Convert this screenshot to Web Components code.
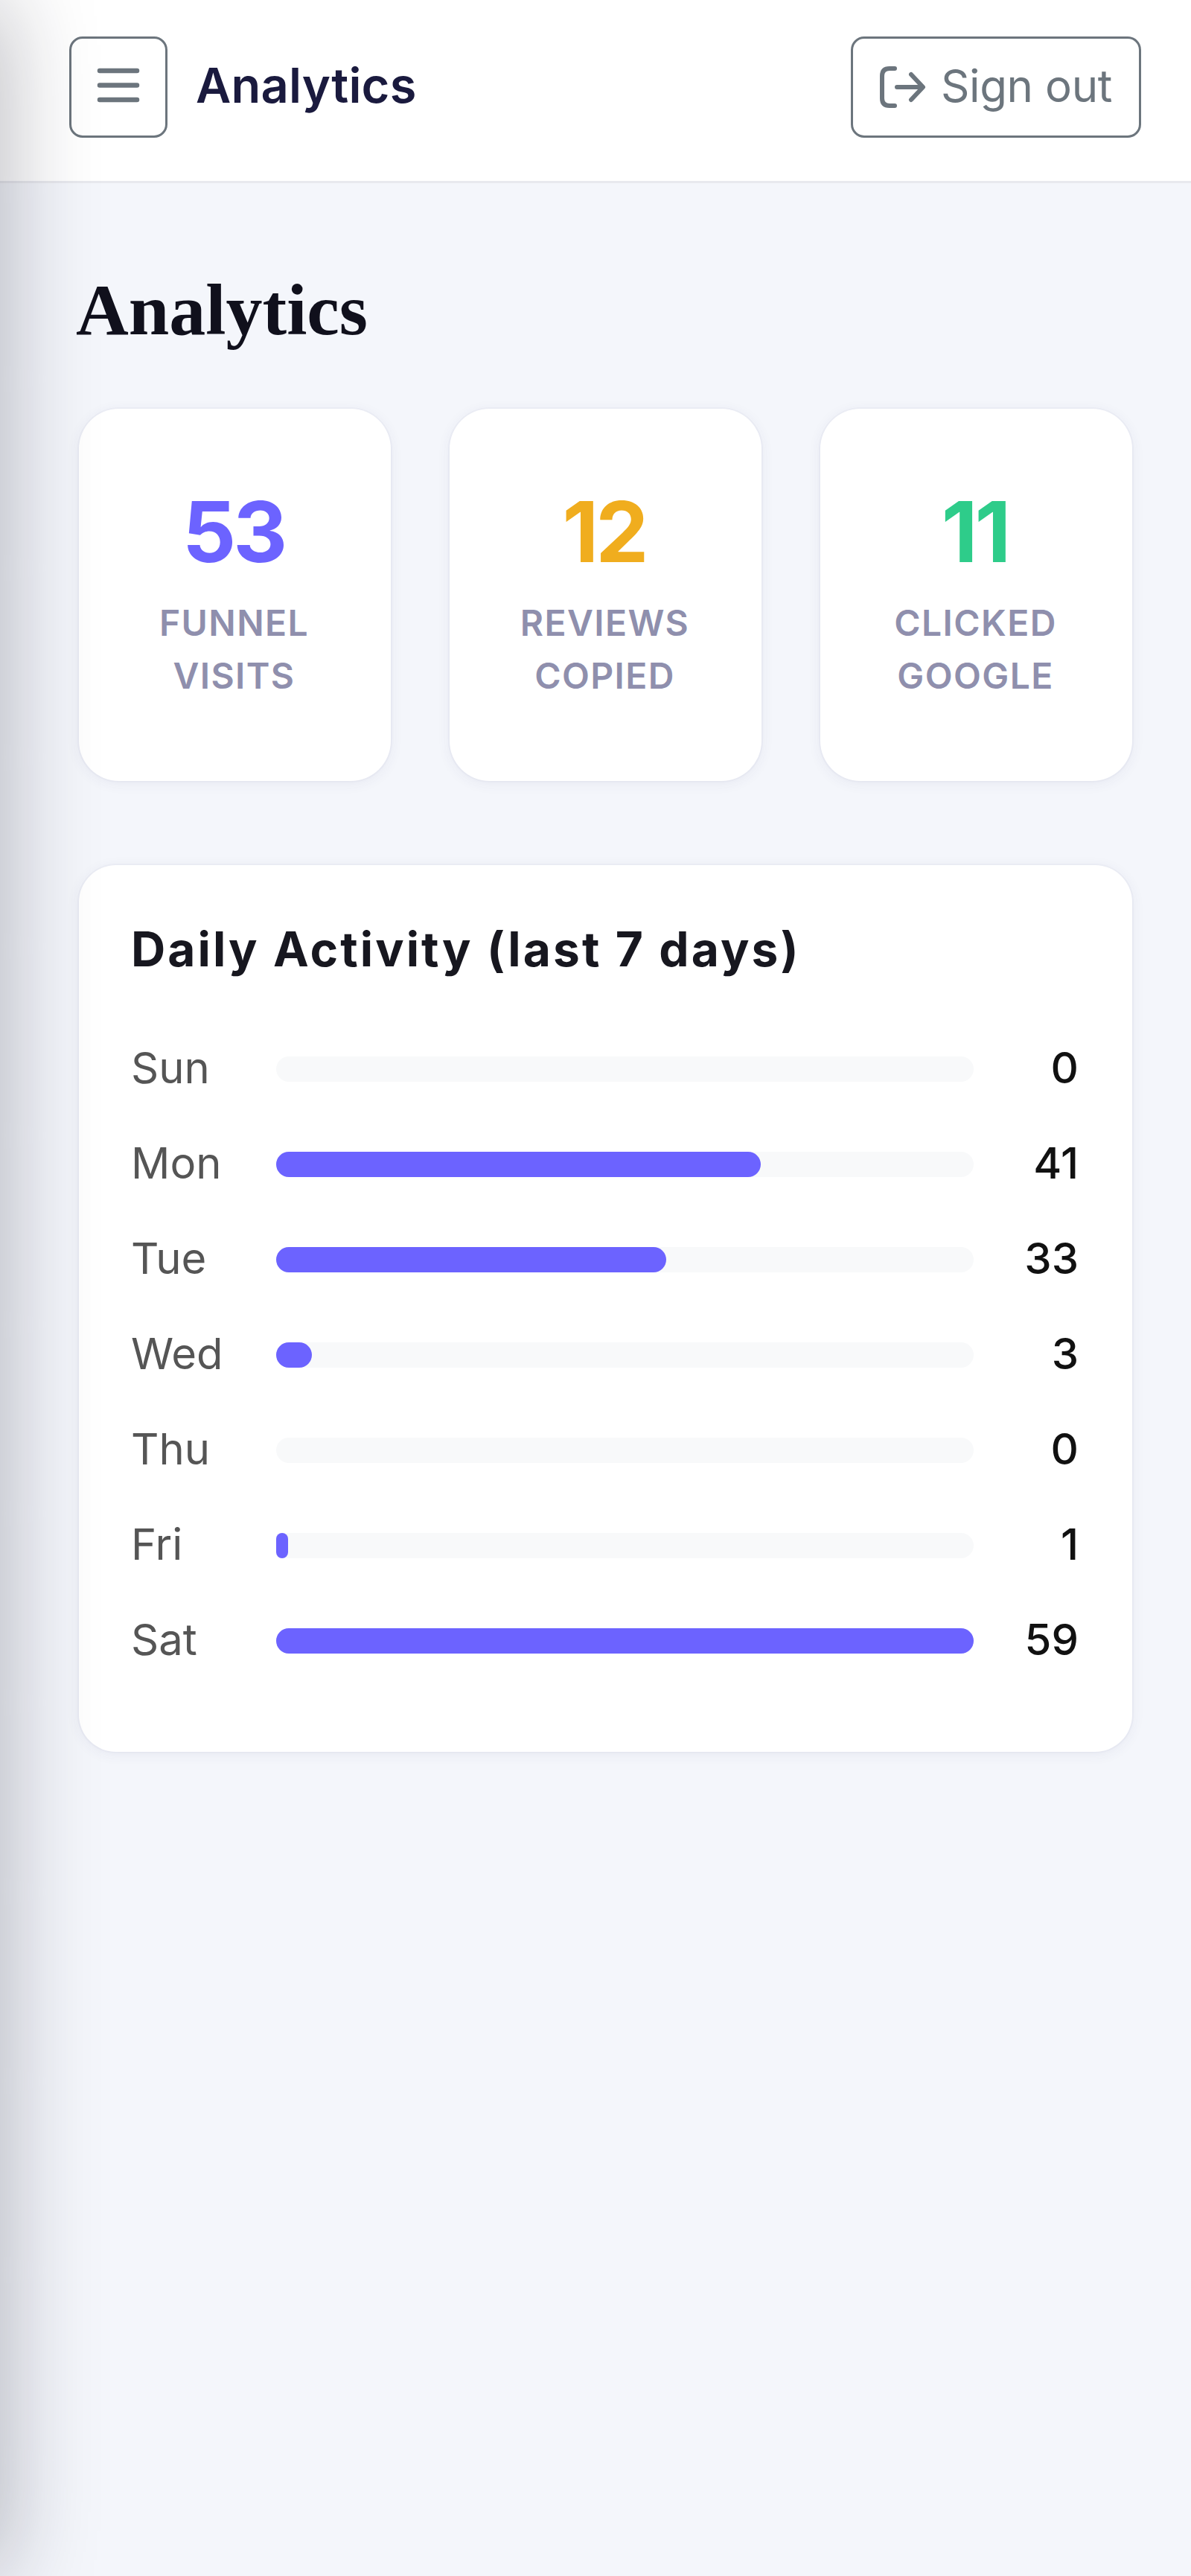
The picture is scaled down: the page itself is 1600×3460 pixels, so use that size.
<!DOCTYPE html>
<html lang="en"><head><meta charset="utf-8"><title>Analytics</title>
<style>
html,body{margin:0;padding:0;height:100%;overflow:hidden;background:#f4f6fb;}
body{font-family:Inter,"Liberation Sans",sans-serif;}
</style></head><body>
<analytics-app>
  <top-bar slot="top" heading="Analytics"></top-bar>
  <page-heading>Analytics</page-heading>
  <stat-row>
    <stat-card value="53" color="#6c63ff">FUNNEL<br>VISITS</stat-card>
    <stat-card value="12" color="#f0ad1e">REVIEWS<br>COPIED</stat-card>
    <stat-card value="11" color="#2ecc8a">CLICKED<br>GOOGLE</stat-card>
  </stat-row>
  <activity-card heading="Daily Activity (last 7 days)">
    <bar-row day="Sun" value="0" max="59"></bar-row>
    <bar-row day="Mon" value="41" max="59"></bar-row>
    <bar-row day="Tue" value="33" max="59"></bar-row>
    <bar-row day="Wed" value="3" max="59"></bar-row>
    <bar-row day="Thu" value="0" max="59"></bar-row>
    <bar-row day="Fri" value="1" max="59"></bar-row>
    <bar-row day="Sat" value="59" max="59"></bar-row>
  </activity-card>
</analytics-app>
<script>
const def=(name,css,html)=>{customElements.define(name,class extends HTMLElement{
  connectedCallback(){ if(this.shadowRoot)return;
    const r=this.attachShadow({mode:'open'});
    r.innerHTML='<style>'+css+'</style>'+(typeof html==='function'?html(this):html);
  }});};
def('analytics-app',`
  :host{display:block;position:relative;width:1600px;height:3460px;overflow:hidden;background:#f4f6fb}
  main{display:flex;flex-direction:column;padding:0 79px 0 106px}
  .drawer{position:absolute;left:-200px;top:0;bottom:0;width:200px;pointer-events:none;box-shadow:0 0 130px rgba(20,22,40,.33)}
`,`<slot name="top"></slot><main><slot></slot></main><div class="drawer"></div>`);
def('top-bar',`
  :host{display:flex;align-items:center;justify-content:space-between;box-sizing:border-box;height:246px;padding:0 67px 10px 93px;background:#fff;border-bottom:3px solid #e8e9ee}
  .left{display:flex;align-items:center;gap:38px}
  .btn{display:flex;align-items:center;justify-content:center;box-sizing:border-box;height:136px;border:3.500px solid #6c757d;border-radius:18px;color:#6c757d;background:#fff}
  .menu{width:132px}
  .menu svg{margin-bottom:6px}
  .out{width:390px;gap:20px;font-size:60px;letter-spacing:-.4px}
  .out span{margin-bottom:4px}
  h2{margin:0 0 4px;font-size:65px;font-weight:600;letter-spacing:.2px;color:#1a1a3e}
  svg{display:block}
`,t=>`<div class="left"><div class="btn menu"><svg width="58" height="48" viewBox="0 0 58 48" fill="none" stroke="#6c757d" stroke-width="6.500" stroke-linecap="round"><path d="M4 5H54M4 24.500H54M4 44H54"/></svg></div><h2>${t.getAttribute('heading')}</h2></div>
  <div class="btn out"><svg width="62" height="56" viewBox="0 0 62 56" fill="none" stroke="#6c757d" stroke-width="6" stroke-linecap="round" stroke-linejoin="round"><path d="M20 3H13Q3 3 3 13V43Q3 53 13 53H20"/><path d="M23 28H57M42 11L58 28L42 45"/></svg><span>Sign out</span></div>`);
def('page-heading',`
  :host{display:block;margin:115px 0 0 -4px}
  h1{margin:0;font-family:"Liberation Serif",serif;font-size:98px;line-height:110px;font-weight:700;color:#10101c}
`,`<h1><slot></slot></h1>`);
def('stat-row',`:host{display:grid;grid-template-columns:repeat(3,419px);column-gap:79px;margin-top:78px}`,`<slot></slot>`);
def('stat-card',`
  :host{display:flex;flex-direction:column;align-items:center;box-sizing:border-box;height:500px;background:#fff;border-radius:54px;box-shadow:0 3px 18px rgba(60,60,110,.07),0 0 0 2px rgba(70,70,130,.03);text-align:center}
  .v{margin-top:95px;font-size:113px;line-height:140px;font-weight:700;letter-spacing:-4px;margin-left:-4px}
  .l{margin-top:17px;margin-left:-2px;font-size:48px;line-height:71px;font-weight:600;letter-spacing:1.400px;color:#8f8fad}
`,t=>`<div class="v" style="color:${t.getAttribute('color')}">${t.getAttribute('value')}</div><div class="l"><slot></slot></div>`);
def('activity-card',`
  :host{display:block;box-sizing:border-box;height:1191px;margin-top:113px;padding:74px 70px 0;background:#fff;border-radius:50px;box-shadow:0 3px 18px rgba(60,60,110,.07),0 0 0 2px rgba(70,70,130,.03)}
  h3{margin:0 0 84px;font-size:64px;line-height:78px;font-weight:700;letter-spacing:3.100px;color:#17171f}
  .rows{display:flex;flex-direction:column;gap:56px}
`,t=>`<h3>${t.getAttribute('heading')}</h3><div class="rows"><slot></slot></div>`);
def('bar-row',`
  :host{display:grid;grid-template-columns:195px 937px 141px;align-items:center;height:72px}
  .d{font-size:58px;color:#555}
  .track{height:34px;border-radius:17px;background:#f8f9fa;margin-top:3px}
  .fill{height:100%;border-radius:17px;background:#6c63ff}
  .n{text-align:right;font-size:58px;font-weight:500;color:#111}
`,t=>{const v=+t.getAttribute('value'),m=+t.getAttribute('max');
  return `<span class="d">${t.getAttribute('day')}</span><div class="track"><div class="fill" style="width:${v/m*100}%"></div></div><span class="n">${v}</span>`});
</script>
</body></html>
